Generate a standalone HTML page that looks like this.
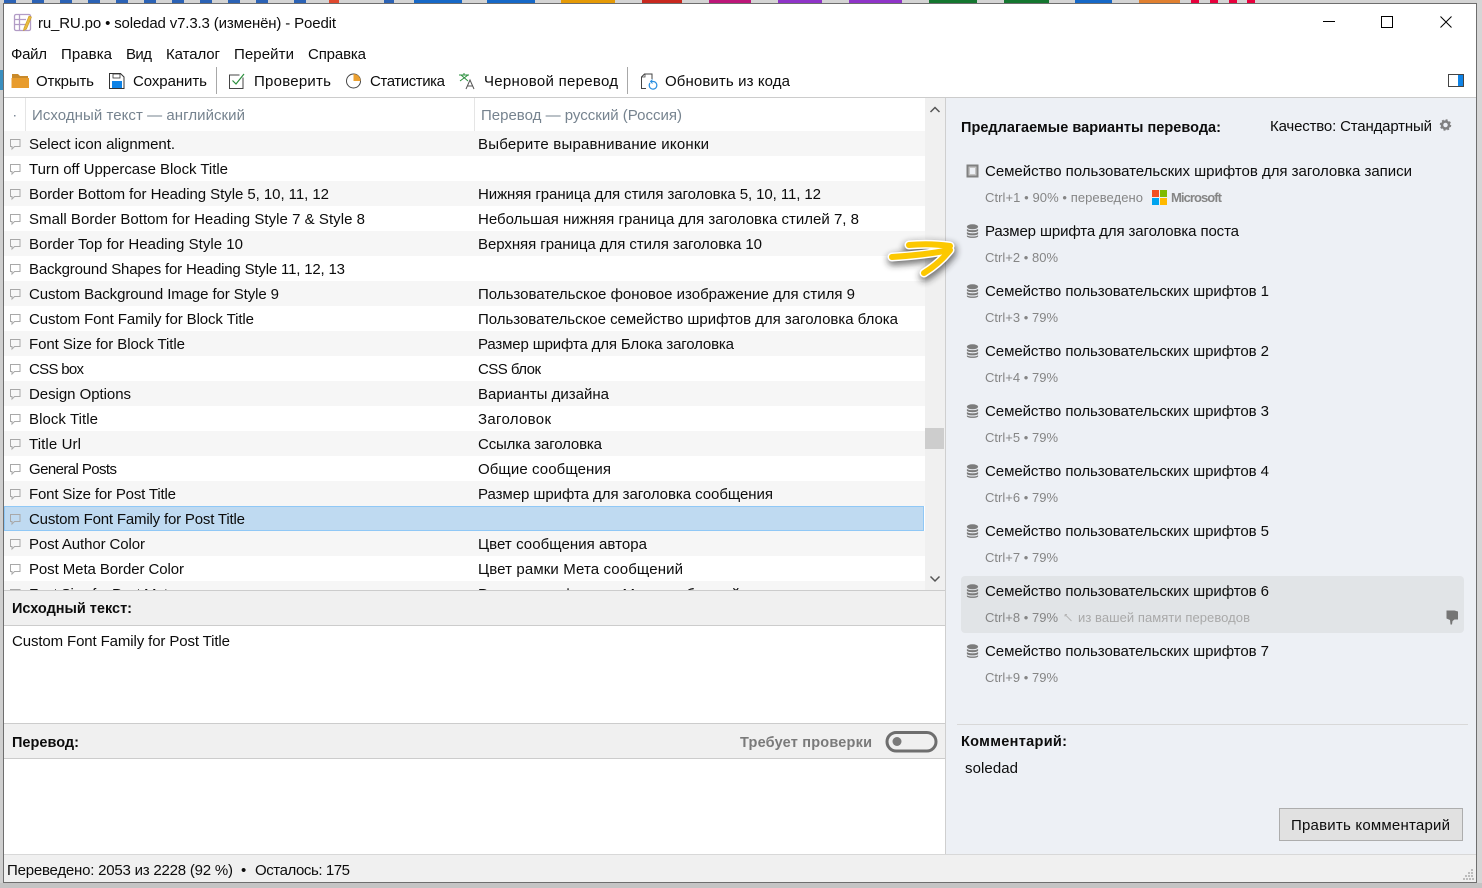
<!DOCTYPE html>
<html lang="ru">
<head>
<meta charset="utf-8">
<title>ru_RU.po - Poedit</title>
<style>
html,body{margin:0;padding:0;width:1482px;height:888px;overflow:hidden;background:#c9c9c9}
svg{display:block}
text{font-family:"Liberation Sans","Noto Sans CJK SC",sans-serif;font-size:15px;fill:#0c0c0c}
.b{font-weight:bold;font-size:14.5px}
.h{fill:#76838f}
.s{font-size:13px;fill:#858585}
</style>
</head>
<body>
<svg xmlns="http://www.w3.org/2000/svg" width="1482" height="888" viewBox="0 0 1482 888">
<defs>
<g id="c"><path d="M10.500 139.500h9.500v7h-5.500l-2.500 2.500v-2.500h-1.500z" fill="none" stroke="#a8a8a8" stroke-width="1"/></g>
<g id="db" fill="#7c7c7c"><ellipse cx="972.500" cy="166.800" rx="5.600" ry="2.500"/><path d="M966.900 168.700c1.500 1.900 9.700 1.900 11.200 0v2.100c-1.500 1.900-9.700 1.900-11.200 0z"/><path d="M966.900 171.900c1.500 1.900 9.700 1.900 11.200 0v2.100c-1.500 1.900-9.700 1.900-11.200 0z"/><path d="M966.900 175.100c1.500 1.900 9.700 1.900 11.200 0v1.400c-1.500 1.900-9.700 1.900-11.200 0z"/></g>
<filter id="sh" x="-30%" y="-50%" width="160%" height="200%"><feGaussianBlur stdDeviation="3.500"/></filter>
<clipPath id="list"><rect x="4" y="98" width="921" height="492"/></clipPath>
</defs>

<!-- desktop strip -->
<rect width="1482" height="888" fill="#cfcfcf"/>
<rect x="0" y="0" width="1482" height="3" fill="#d4d4d4"/>
<g fill="#2b62b5"><rect x="4" y="0" width="12" height="3"/><rect x="32" y="0" width="12" height="3"/><rect x="60" y="0" width="12" height="3"/><rect x="88" y="0" width="12" height="3"/><rect x="116" y="0" width="12" height="3"/><rect x="144" y="0" width="12" height="3"/><rect x="172" y="0" width="12" height="3"/><rect x="200" y="0" width="12" height="3"/><rect x="228" y="0" width="12" height="3"/><rect x="256" y="0" width="12" height="3"/><rect x="294" y="0" width="12" height="3"/><rect x="384" y="0" width="10" height="3"/></g>
<rect x="329" y="0" width="10" height="3" fill="#e0492f"/>
<rect x="414" y="0" width="48" height="3" fill="#1668c7"/>
<rect x="487" y="0" width="48" height="3" fill="#1668c7"/>
<rect x="561" y="0" width="54" height="3" fill="#e59a06"/>
<rect x="642" y="0" width="40" height="3" fill="#c8281e"/>
<rect x="709" y="0" width="42" height="3" fill="#bd1679"/>
<rect x="778" y="0" width="44" height="3" fill="#8f34c8"/>
<rect x="849" y="0" width="53" height="3" fill="#8f34c8"/>
<rect x="929" y="0" width="48" height="3" fill="#14762f"/>
<rect x="1004" y="0" width="45" height="3" fill="#14762f"/>
<rect x="1075" y="0" width="37" height="3" fill="#1668c7"/>
<rect x="1139" y="0" width="41" height="3" fill="#e08030"/>
<g fill="#e8003c"><rect x="1191" y="0" width="8" height="3"/><rect x="1210" y="0" width="8" height="3"/><rect x="1229" y="0" width="8" height="3"/><rect x="1247" y="0" width="8" height="3"/></g>
<rect x="0" y="70" width="3" height="20" fill="#3a8fc0"/>
<rect x="1477" y="0" width="5" height="888" fill="#d6d6d6"/>
<rect x="0" y="883" width="1482" height="5" fill="#c4c4c4"/>

<!-- window -->
<rect x="3.500" y="3.500" width="1473" height="879" fill="#fff" stroke="#6e6e6e" stroke-width="1"/>

<!-- title -->
<g fill="none" stroke="#b29cc6" stroke-width="1.300"><rect x="14.500" y="14.500" width="16" height="16" rx="1.500"/><path d="M15 19.500h11M15 24.500h11M19.500 15v15"/></g>
<path d="M24 28l5-12 2.500 1-5 12-3 1.500z" fill="#e9bb3f" stroke="#c89a20" stroke-width=".6"/>
<text x="38" y="28" textLength="298">ru_RU.po • soledad v7.3.3 (изменён) - Poedit</text>
<path d="M1323 21.500h12" stroke="#000" stroke-width="1"/>
<rect x="1381.500" y="16.500" width="11" height="11" fill="none" stroke="#000"/>
<path d="M1440.500 16.500l11 11M1451.500 16.500l-11 11" stroke="#000" stroke-width="1"/>

<!-- menu -->
<text x="11" y="59" textLength="36">Файл</text>
<text x="61" y="59" textLength="51">Правка</text>
<text x="126" y="59" textLength="26">Вид</text>
<text x="166" y="59" textLength="54">Каталог</text>
<text x="234" y="59" textLength="60">Перейти</text>
<text x="308" y="59" textLength="58">Справка</text>

<!-- toolbar -->
<path d="M12 74h6l2 2h8v2H14l-2 1z" fill="#c98a2a"/><path d="M11.500 88V78h17.500v10z" fill="#e89c2d"/>
<text x="36" y="86" textLength="58">Открыть</text>
<path d="M109.500 73.500h11l3.500 3.500v11.500h-14.500z" fill="#fff" stroke="#333"/><rect x="113" y="74" width="7" height="4" fill="#fff" stroke="#333" stroke-width=".8"/><rect x="112" y="81" width="10" height="7" fill="#0f83e6"/>
<text x="133" y="86" textLength="74">Сохранить</text>
<rect x="216" y="67" width="1" height="27" fill="#a8a8a8"/>
<path d="M243 77.500v11h-13.500v-13.500h10" fill="none" stroke="#444"/><path d="M232.500 80.500l3.500 3.500 8-10" fill="none" stroke="#2a8f3c" stroke-width="1.200"/>
<text x="254" y="86" textLength="77">Проверить</text>
<circle cx="353.500" cy="81" r="7" fill="#fff" stroke="#444"/><path d="M353.500 74v7h7a7 7 0 0 0-7-7z" fill="#eba030"/>
<text x="370" y="86" textLength="75">Статистика</text>
<path d="M459 75h10M464 73v2M460 81l8-6M461 75l7 6" fill="none" stroke="#2a8f3c" stroke-width="1"/><path d="M466 89l4-9 4 9M467.500 86h5" fill="none" stroke="#555" stroke-width="1"/>
<text x="484" y="86" textLength="134">Черновой перевод</text>
<rect x="627" y="67" width="1" height="27" fill="#a8a8a8"/>
<path d="M646 88.500h-4.500V77l3-3h7.500v5" fill="none" stroke="#444"/><path d="M645 74v3h-3" fill="none" stroke="#444" stroke-width=".8"/><path d="M650 83a3.800 3.800 0 1 0 3-1.500h-2" fill="none" stroke="#2b8fe0" stroke-width="1.200"/><path d="M652.500 79.500l-2 2 2 2" fill="none" stroke="#2b8fe0"/>
<text x="665" y="86" textLength="125">Обновить из кода</text>
<rect x="1448.500" y="74.500" width="15" height="12" fill="#fff" stroke="#444"/><rect x="1458" y="75" width="5" height="11" fill="#0f83e6"/>

<rect x="4" y="97" width="1472" height="1" fill="#cccccc"/>

<!-- right pane background -->
<rect x="945" y="98" width="531" height="756" fill="#edf0f5"/>
<rect x="945" y="98" width="1" height="756" fill="#cfcfcf"/>

<!-- list -->
<g clip-path="url(#list)">
<rect x="4" y="131" width="921" height="25" fill="#f6f6f6"/>
<rect x="4" y="181" width="921" height="25" fill="#f6f6f6"/>
<rect x="4" y="231" width="921" height="25" fill="#f6f6f6"/>
<rect x="4" y="281" width="921" height="25" fill="#f6f6f6"/>
<rect x="4" y="331" width="921" height="25" fill="#f6f6f6"/>
<rect x="4" y="381" width="921" height="25" fill="#f6f6f6"/>
<rect x="4" y="431" width="921" height="25" fill="#f6f6f6"/>
<rect x="4" y="481" width="921" height="25" fill="#f6f6f6"/>
<rect x="4" y="531" width="921" height="25" fill="#f6f6f6"/>
<rect x="4" y="581" width="921" height="25" fill="#f6f6f6"/>
<rect x="4.500" y="506.500" width="919" height="24" fill="#bfdaf1" stroke="#90c8f6"/>

<use href="#c" y="0"/><use href="#c" y="25"/><use href="#c" y="50"/><use href="#c" y="75"/><use href="#c" y="100"/><use href="#c" y="125"/><use href="#c" y="150"/><use href="#c" y="175"/><use href="#c" y="200"/><use href="#c" y="225"/><use href="#c" y="250"/><use href="#c" y="275"/><use href="#c" y="300"/><use href="#c" y="325"/><use href="#c" y="350"/><use href="#c" y="375"/><use href="#c" y="400"/><use href="#c" y="425"/><use href="#c" y="450"/>

<text x="29" y="149" textLength="146">Select icon alignment.</text>
<text x="29" y="174" textLength="199">Turn off Uppercase Block Title</text>
<text x="29" y="199" textLength="300">Border Bottom for Heading Style 5, 10, 11, 12</text>
<text x="29" y="224" textLength="336">Small Border Bottom for Heading Style 7 &amp; Style 8</text>
<text x="29" y="249" textLength="214">Border Top for Heading Style 10</text>
<text x="29" y="274" textLength="316">Background Shapes for Heading Style 11, 12, 13</text>
<text x="29" y="299" textLength="250">Custom Background Image for Style 9</text>
<text x="29" y="324" textLength="225">Custom Font Family for Block Title</text>
<text x="29" y="349" textLength="156">Font Size for Block Title</text>
<text x="29" y="374" textLength="55">CSS box</text>
<text x="29" y="399" textLength="102">Design Options</text>
<text x="29" y="424" textLength="69">Block Title</text>
<text x="29" y="449" textLength="52">Title Url</text>
<text x="29" y="474" textLength="88">General Posts</text>
<text x="29" y="499" textLength="147">Font Size for Post Title</text>
<text x="29" y="524" textLength="216">Custom Font Family for Post Title</text>
<text x="29" y="549" textLength="116">Post Author Color</text>
<text x="29" y="574" textLength="155">Post Meta Border Color</text>
<text x="29" y="599" textLength="147">Font Size for Post Meta</text>

<text x="478" y="149" textLength="231">Выберите выравнивание иконки</text>
<text x="478" y="199" textLength="343">Нижняя граница для стиля заголовка 5, 10, 11, 12</text>
<text x="478" y="224" textLength="381">Небольшая нижняя граница для заголовка стилей 7, 8</text>
<text x="478" y="249" textLength="284">Верхняя граница для стиля заголовка 10</text>
<text x="478" y="299" textLength="377">Пользовательское фоновое изображение для стиля 9</text>
<text x="478" y="324" textLength="420">Пользовательское семейство шрифтов для заголовка блока</text>
<text x="478" y="349" textLength="256">Размер шрифта для Блока заголовка</text>
<text x="478" y="374" textLength="63">CSS блок</text>
<text x="478" y="399" textLength="131">Варианты дизайна</text>
<text x="478" y="424" textLength="73">Заголовок</text>
<text x="478" y="449" textLength="124">Ссылка заголовка</text>
<text x="478" y="474" textLength="133">Общие сообщения</text>
<text x="478" y="499" textLength="295">Размер шрифта для заголовка сообщения</text>
<text x="478" y="549" textLength="169">Цвет сообщения автора</text>
<text x="478" y="574" textLength="205">Цвет рамки Мета сообщений</text>
<text x="478" y="599" textLength="262">Размер шрифта для Мета сообщений</text>
</g>

<!-- list header -->
<rect x="25" y="98" width="1" height="33" fill="#e5e5e5"/>
<rect x="474" y="98" width="1" height="33" fill="#e5e5e5"/>
<rect x="14" y="115" width="1.500" height="1.500" fill="#7f8b99"/>
<text class="h" x="32" y="120" textLength="213">Исходный текст — английский</text>
<text class="h" x="481" y="120" textLength="201">Перевод — русский (Россия)</text>

<!-- scrollbar -->
<rect x="925" y="98" width="20" height="492" fill="#f0f0f0"/>
<rect x="925" y="428" width="19" height="21" fill="#cdcdcd"/>
<path d="M930.500 112l4.500-4.500 4.500 4.500" fill="none" stroke="#555" stroke-width="1.500"/>
<path d="M930.500 576.500l4.500 4.500 4.500-4.500" fill="none" stroke="#555" stroke-width="1.500"/>

<!-- source -->
<rect x="4" y="590" width="941" height="35" fill="#f0f0f0"/>
<rect x="4" y="590" width="941" height="1" fill="#cccccc"/>
<rect x="4" y="625" width="941" height="1" fill="#cccccc"/>
<text class="b" x="12" y="613" textLength="120">Исходный текст:</text>
<text x="12" y="646" textLength="218">Custom Font Family for Post Title</text>

<!-- translation -->
<rect x="4" y="723" width="941" height="35" fill="#f0f0f0"/>
<rect x="4" y="723" width="941" height="1" fill="#cccccc"/>
<rect x="4" y="758" width="941" height="1" fill="#cccccc"/>
<text class="b" x="12" y="747" textLength="67">Перевод:</text>
<text class="b" x="740" y="747" textLength="132" style="fill:#7a7a7a">Требует проверки</text>
<rect x="887" y="732.500" width="49" height="18.500" rx="9.250" fill="#f0f0f0" stroke="#6e6e6e" stroke-width="3"/>
<circle cx="897" cy="741.500" r="4.500" fill="#7a7a7a"/>

<!-- status -->
<rect x="4" y="854" width="1472" height="28" fill="#f0f0f0"/>
<rect x="4" y="854" width="1472" height="1" fill="#d8d8d8"/>
<text x="7" y="875" textLength="226">Переведено: 2053 из 2228 (92 %)</text>
<text x="241" y="875">•</text>
<text x="255" y="875" textLength="95">Осталось: 175</text>
<g fill="#bdbdbd"><rect x="1471" y="869" width="2" height="2"/><rect x="1468" y="872" width="2" height="2"/><rect x="1471" y="872" width="2" height="2"/><rect x="1465" y="875" width="2" height="2"/><rect x="1468" y="875" width="2" height="2"/><rect x="1471" y="875" width="2" height="2"/><rect x="1463" y="878" width="2" height="2"/><rect x="1466" y="878" width="2" height="2"/><rect x="1469" y="878" width="2" height="2"/><rect x="1472" y="878" width="2" height="2"/></g>

<!-- right pane -->
<text class="b" x="961" y="132" textLength="260">Предлагаемые варианты перевода:</text>
<text x="1270" y="131" textLength="162">Качество: Стандартный</text>
<circle cx="1445.500" cy="125" r="3.500" fill="none" stroke="#808080" stroke-width="2.500"/>
<circle cx="1445.500" cy="125" r="5" fill="none" stroke="#808080" stroke-width="1.500" stroke-dasharray="2 1.930"/>

<rect x="961" y="576" width="503" height="57" rx="4" fill="#e1e4e7"/>

<rect x="967.500" y="165.500" width="10" height="11" fill="#c4c4c4" stroke="#808080" stroke-width="2"/>
<rect x="970" y="168" width="5" height="6" fill="#edf0f5"/>
<text x="985" y="176" textLength="427">Семейство пользовательских шрифтов для заголовка записи</text>
<text class="s" x="985" y="202" textLength="158">Ctrl+1 • 90% • переведено</text>
<rect x="1152" y="190" width="7" height="7" fill="#f25022"/><rect x="1160" y="190" width="7" height="7" fill="#7fba00"/><rect x="1152" y="198" width="7" height="7" fill="#00a4ef"/><rect x="1160" y="198" width="7" height="7" fill="#ffb900"/>
<text class="s" x="1171" y="202" textLength="51" style="font-weight:bold">Microsoft</text>

<use href="#db" y="60"/>
<text x="985" y="236" textLength="254">Размер шрифта для заголовка поста</text>
<text class="s" x="985" y="262" textLength="73">Ctrl+2 • 80%</text>

<use href="#db" y="120"/>
<text x="985" y="296" textLength="284">Семейство пользовательских шрифтов 1</text>
<text class="s" x="985" y="322" textLength="73">Ctrl+3 • 79%</text>

<use href="#db" y="180"/>
<text x="985" y="356" textLength="284">Семейство пользовательских шрифтов 2</text>
<text class="s" x="985" y="382" textLength="73">Ctrl+4 • 79%</text>

<use href="#db" y="240"/>
<text x="985" y="416" textLength="284">Семейство пользовательских шрифтов 3</text>
<text class="s" x="985" y="442" textLength="73">Ctrl+5 • 79%</text>

<use href="#db" y="300"/>
<text x="985" y="476" textLength="284">Семейство пользовательских шрифтов 4</text>
<text class="s" x="985" y="502" textLength="73">Ctrl+6 • 79%</text>

<use href="#db" y="360"/>
<text x="985" y="536" textLength="284">Семейство пользовательских шрифтов 5</text>
<text class="s" x="985" y="562" textLength="73">Ctrl+7 • 79%</text>

<use href="#db" y="420"/>
<text x="985" y="596" textLength="284">Семейство пользовательских шрифтов 6</text>
<text class="s" x="985" y="622" textLength="73">Ctrl+8 • 79%</text>
<path d="M1065 614.500l6.500 6.500" stroke="#b5b5b5" stroke-width="1" fill="none"/><path d="M1065 614.500h2M1065 614.500v2" stroke="#b5b5b5" stroke-width="1" fill="none"/>
<text class="s" x="1078" y="622" textLength="172" style="fill:#a9a9a9">из вашей памяти переводов</text>
<path d="M1446.500 610.500h8l3.500 1v8h-3.500l-2 1.500-.5 3.500h-1.500l-.5-4.500-3.500-1.500z" fill="#757575"/>

<use href="#db" y="480"/>
<text x="985" y="656" textLength="284">Семейство пользовательских шрифтов 7</text>
<text class="s" x="985" y="682" textLength="73">Ctrl+9 • 79%</text>

<rect x="957" y="724" width="511" height="1" fill="#d8d8d8"/>
<text class="b" x="961" y="746" textLength="106">Комментарий:</text>
<text x="965" y="773" textLength="53">soledad</text>
<rect x="1279.500" y="808.500" width="183" height="32" fill="#e1e1e1" stroke="#adadad"/>
<text x="1291" y="830" textLength="159">Править комментарий</text>

<!-- arrow -->
<g fill="none" stroke-linecap="round" stroke-linejoin="round">
<path d="M908 245Q930 243 950 246L892 257Q925 255 950 250Q940 263 924 273" stroke="#222" stroke-width="11" opacity=".6" filter="url(#sh)" transform="translate(1 3)"/>
<path d="M909 245Q930 243 950 246M892 257Q925 255 950 250Q940 263 924 273" stroke="#fff" stroke-width="9"/>
<path d="M909 245Q930 243 950 246M892 257Q925 255 950 250Q940 263 924 273" stroke="#fcc800" stroke-width="6"/>
</g>
</svg>
</body>
</html>
